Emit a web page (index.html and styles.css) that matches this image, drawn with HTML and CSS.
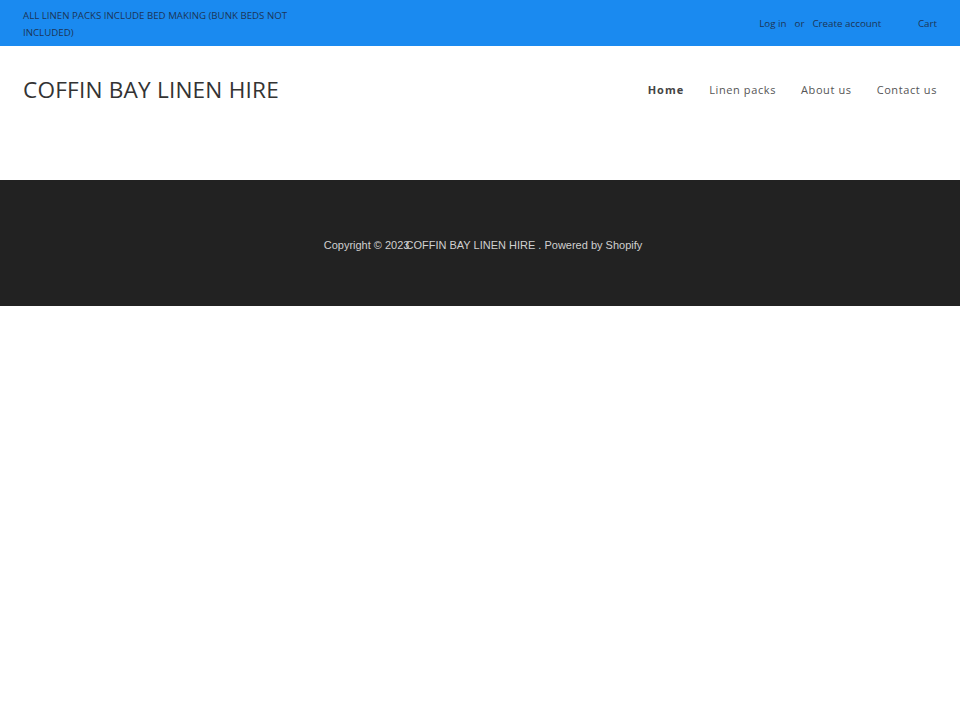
FILE: index.html
```html
<!DOCTYPE html>
<html>
<head>
<meta charset="utf-8">
<link rel="stylesheet" href="styles.css">
</head>
<body>
<div class="topbar">
  <div class="announce">ALL LINEN PACKS INCLUDE BED MAKING (BUNK BEDS NOT INCLUDED)</div>
  <div class="account">
    <a href="#">Log in</a><span class="or">or</span><a href="#">Create account</a>
    <a href="#" class="cart">Cart</a>
  </div>
</div>
<header class="header">
  <div class="logo">COFFIN BAY LINEN HIRE</div>
  <nav class="nav">
    <a href="#" class="active">Home</a>
    <a href="#">Linen packs</a>
    <a href="#">About us</a>
    <a href="#">Contact us</a>
  </nav>
</header>
<footer class="footer">
  <p class="copy">Copyright © 2023<span class="shop">COFFIN BAY LINEN HIRE</span> . Powered by Shopify</p>
</footer>
</body>
</html>
```
FILE: styles.css
```css
html, body { margin: 0; padding: 0; background: #fff; }
body { font-family: "Open Sans", "DejaVu Sans", sans-serif; }
a { text-decoration: none; color: inherit; }
.topbar {
  background: #1a8af0;
  height: 46px;
  display: flex;
  justify-content: space-between;
  align-items: flex-start;
  padding: 0 23px;
  color: #1c3557;
  box-sizing: border-box;
}
.announce {
  width: 285px;
  font-size: 9.7px;
  line-height: 17px;
  padding-top: 7px;
}
.account {
  font-size: 9.8px;
  padding-top: 17px;
}
.or { margin: 0 8px; }
.cart { margin-left: 34px; }
.header {
  display: flex;
  justify-content: space-between;
  padding: 28px 23px 0;
  height: 106px;
  align-items: flex-start;
}
.logo {
  font-size: 22.6px;
  line-height: 32px;
  color: #333;
  letter-spacing: 0.2px;
}
.nav {
  display: flex;
  gap: 25px;
  font-size: 11px;
  letter-spacing: 0.6px;
  color: #555;
  padding-top: 8px;
}
.nav .active { font-weight: 700; color: #444; letter-spacing: 1px; }
.footer {
  background: #222;
  height: 126px;
  display: flex;
  align-items: center;
  justify-content: center;
}
.copy {
  margin: 0;
  font-family: "Liberation Sans", sans-serif;
  font-size: 11px;
  color: #d0d0d0;
  padding-left: 6px;
  padding-top: 4px;
}
.shop { margin-left: -4px; }
```
